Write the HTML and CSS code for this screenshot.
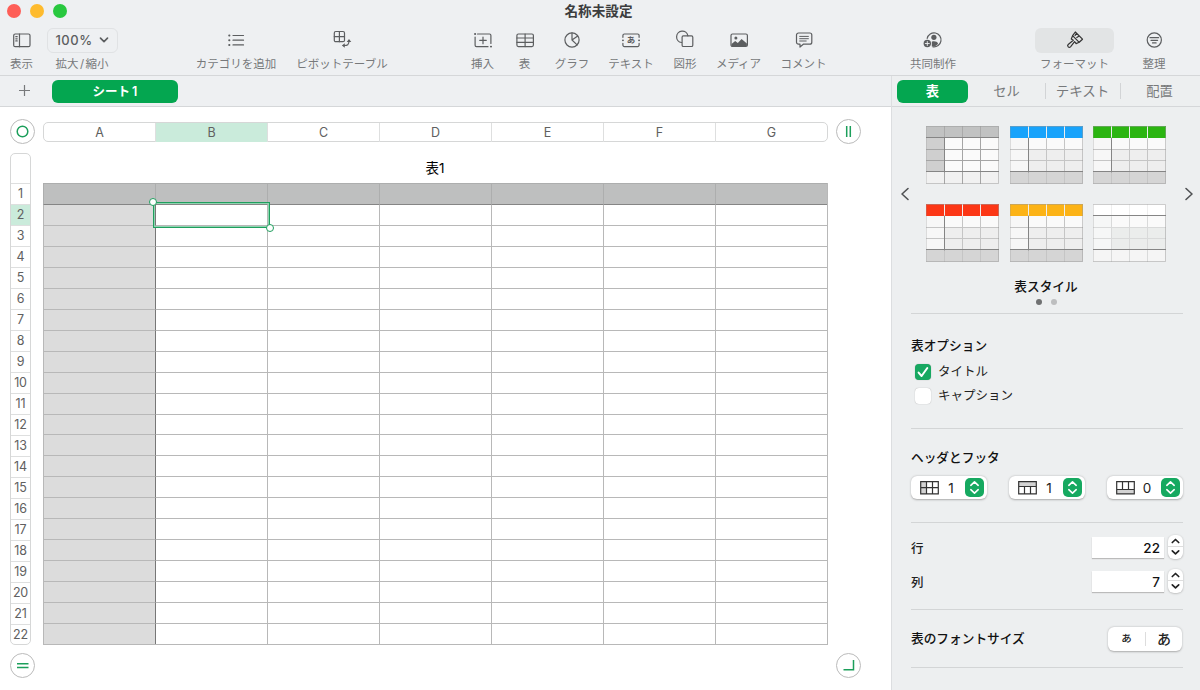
FILE: index.html
```html
<!DOCTYPE html>
<html lang="ja">
<head>
    <meta charset="UTF-8">
    <meta name="viewport" content="width=device-width, initial-scale=1.0">
    <title>名称未設定</title>
    <link rel="stylesheet" href="styles.css">
</head>
<body>
    <header class="titlebar">
        <div class="title-row">
            <div class="lights"><i class="light red"></i><i class="light yellow"></i><i class="light green"></i></div>
            <h1>名称未設定</h1>
        </div>
        <nav class="toolbar">
            <div class="group view">
                <div class="tool">
                    <span class="icon"><svg width="20" height="20" viewBox="0 0 20 20"><rect x="1.7" y="4" width="16.3" height="12.7" rx="1.5"/><path d="M7.5 4v12.7M3.8 6.7h1.4M3.8 8.8h1.4M3.8 10.9h1.4"/></svg></span>
                    <span>表示</span>
                </div>
                <div class="tool">
                    <span class="icon zoom">100% <svg width="10" height="8" viewBox="0 0 10 8"><path d="M1.5 2.2L5 5.6l3.5-3.4" stroke-width="1.7"/></svg></span>
                    <span class="zoom-label">拡大<i>/</i>縮小</span>
                </div>
            </div>
            <div class="group data">
                <div class="tool">
                    <span class="icon"><svg width="20" height="20" viewBox="0 0 20 20"><path d="M7 5.5h10.5M7 10.2h10.5M7 14.9h10.5"/><path d="M3.2 5.5h.2M3.2 10.2h.2M3.2 14.9h.2" stroke-width="2"/></svg></span>
                    <span>カテゴリを追加</span>
                </div>
                <div class="tool">
                    <span class="icon"><svg width="20" height="20" viewBox="0 0 20 20"><rect x="2.3" y="1.5" width="10.2" height="10.2" rx="1.5"/><path d="M7.4 1.5v10.2M2.3 6.6h10.2M11.3 15.5c4.3.2 5.7-.8 5.7-4.8"/><path class="solid" d="M12.8 13.3v4.4L9.9 15.5zM14.7 12l2.3-3 2.3 3z"/></svg></span>
                    <span>ピボットテーブル</span>
                </div>
            </div>
            <div class="group insert">
                <div class="tool">
                    <span class="icon"><svg width="20" height="20" viewBox="0 0 20 20"><path d="M4.5 4h12a1.4 1.4 0 0 1 1.4 1.4V13.5M15 16.7H3.5a1.4 1.4 0 0 1-1.4-1.4V7M10 7v6.7M6.7 10.3h6.6"/><path d="M2 4h.2M17.9 16.6h.2" stroke-width="1.9"/></svg></span>
                    <span>挿入</span>
                </div>
                <div class="tool">
                    <span class="icon"><svg width="20" height="20" viewBox="0 0 20 20"><rect x="1.9" y="4" width="16.5" height="12.6" rx="1.5"/><path d="M1.9 8h16.5M1.9 12.3h16.5M10.1 4v12.6"/></svg></span>
                    <span>表</span>
                </div>
                <div class="tool">
                    <span class="icon"><svg width="20" height="20" viewBox="0 0 20 20"><circle cx="10" cy="10" r="7.1"/><path d="M10 2.9V10l5.1 4.9M10 10l5.7-4.1"/></svg></span>
                    <span>グラフ</span>
                </div>
                <div class="tool">
                    <span class="icon textbox"><svg width="20" height="20" viewBox="0 0 20 20"><path d="M1.9 7.3V5.5A1.5 1.5 0 0 1 3.4 4h13.2a1.5 1.5 0 0 1 1.5 1.5v1.8M18.1 13.3v1.8a1.5 1.5 0 0 1-1.5 1.5H3.4a1.5 1.5 0 0 1-1.5-1.5v-1.8"/><path d="M1.9 10.3h.1M18 10.3h.1" stroke-width="1.8"/></svg><b>あ</b></span>
                    <span>テキスト</span>
                </div>
                <div class="tool">
                    <span class="icon"><svg width="20" height="20" viewBox="0 0 20 20"><path d="M6.5 12.5A5.7 5.7 0 1 1 12.9 5.8"/><rect x="7.1" y="5.9" width="10.7" height="10.6" rx="1.3"/></svg></span>
                    <span>図形</span>
                </div>
                <div class="tool">
                    <span class="icon"><svg width="20" height="20" viewBox="0 0 20 20"><rect x="2" y="4" width="16.4" height="12.5" rx="1.5"/><path class="solid" d="M2.5 14l3.7-3 2.6 2 3.8-4 5.3 4.5V16H2.5z"/><circle class="solid" cx="6.9" cy="7.9" r="1.5"/></svg></span>
                    <span>メディア</span>
                </div>
                <div class="tool">
                    <span class="icon"><svg width="20" height="20" viewBox="0 0 20 20"><path d="M4.5 3h11.3a2 2 0 0 1 2 2v7.2a2 2 0 0 1-2 2H9.3L6 17v-2.8H4.5a2 2 0 0 1-2-2V5a2 2 0 0 1 2-2z"/><path d="M5.7 6.4h8.7M5.7 8.7h8.7M5.7 11h6.5" stroke-width="1"/></svg></span>
                    <span>コメント</span>
                </div>
            </div>
            <div class="group share">
                <div class="tool">
                    <span class="icon"><svg width="20" height="20" viewBox="0 0 20 20"><path d="M4.2 8.3A7 7 0 1 1 10 16.8"/><circle class="solid" cx="10.9" cy="7.3" r="2.6"/><path class="solid" d="M8.8 16.4v-4.7c2.4-.9 5.4-.2 6.3 2-1.2 1.8-3.5 3-6.3 2.7z"/><circle class="solid" cx="4.3" cy="13.5" r="3.7"/><path class="light-line" d="M4.3 11.5v4M2.3 13.5h4"/></svg></span>
                    <span>共同制作</span>
                </div>
            </div>
            <div class="group inspect">
                <div class="tool active">
                    <span class="icon"><svg width="20" height="20" viewBox="0 0 20 20"><path d="M10.3 2l7.2 7.2-3.3 3.1-6.6-6.6zM7.6 5.7l-1.3 3.2 2 1.4-5.1 4.2a1.6 1.6 0 0 0 2.3 2.3l4.1-5.1 1.5 1.9 3.1-1.3M11.5 3.4l-1.4 2M14.2 6l-2.4 1.5"/></svg></span>
                    <span>フォーマット</span>
                </div>
                <div class="tool">
                    <span class="icon"><svg width="20" height="20" viewBox="0 0 20 20"><circle cx="10.3" cy="10" r="7.1"/><path d="M6 7.7h8.6M7 10.3h6.6M8.5 12.9h3.6"/></svg></span>
                    <span>整理</span>
                </div>
            </div>
        </nav>
    </header>

    <main class="window">
        <section class="document">
            <div class="sheet-tabs">
                <span class="add"><svg width="11" height="11" viewBox="0 0 11 11"><path d="M5.5 0v11M0 5.5h11"/></svg></span>
                <span class="sheet-tab">シート<i>1</i></span>
            </div>
            <div class="canvas">
                <span class="knob"><svg width="23" height="23" viewBox="0 0 23 23"><circle cx="11.5" cy="11.5" r="5.3"/></svg></span>
                <div class="columns" id="columns"></div>
                <span class="knob"><svg width="23" height="23" viewBox="0 0 23 23"><path d="M9.7 6v11M13.3 6v11"/></svg></span>

                <div class="rows" id="rows"></div>
                <div class="table-area">
                    <div class="table-title">表1</div>
                    <div class="sheet" id="sheet"></div>
                </div>

                <span class="knob bottom-left"><svg width="23" height="23" viewBox="0 0 23 23"><path d="M6 9.7h11.5M6 13.5h11.5"/></svg></span>
                <span class="knob bottom-right"><svg width="23" height="23" viewBox="0 0 23 23"><path d="M6.5 15.8h10V6"/></svg></span>
            </div>
        </section>

        <aside class="panel">
            <div class="panel-tabs">
                <span class="on">表</span><span>セル</span><span class="text-tab">テキスト</span><span>配置</span>
            </div>

            <div class="styles">
                <svg class="arrow" width="10" height="14" viewBox="0 0 10 14"><path d="M8 1.5L2 7l6 5.5"/></svg>
                <div class="thumbs" id="thumbs"></div>
                <svg class="arrow" width="10" height="14" viewBox="0 0 10 14"><path d="M2 1.5L8 7l-6 5.5"/></svg>
            </div>
            <div class="styles-caption">表スタイル</div>
            <div class="dots"><i class="current"></i><i></i></div>

            <div class="section options">
                <h2>表オプション</h2>
                <div class="check"><span class="box checked"><svg width="16" height="16" viewBox="0 0 16 16"><path d="M3.6 8.6l3 3.4 5.7-8"/></svg></span>タイトル</div>
                <div class="check"><span class="box"></span>キャプション</div>
            </div>

            <div class="section headers">
                <h2>ヘッダとフッタ</h2>
                <div class="popups">
                    <div class="popup">
                        <svg width="19" height="14" viewBox="0 0 19 14"><path class="shade" d="M1 1h5.5v12H1z"/><path d="M.7.7h17.6v12.1H.7zM.7 6.7h17.6M6.5.7v12.1M12.5.7v12.1"/></svg>
                        <span>1</span><b><svg width="19" height="19" viewBox="0 0 19 19"><path d="M5.8 7.3l3.7-3.5 3.7 3.5M5.8 11.7l3.7 3.5 3.7-3.5"/></svg></b>
                    </div>
                    <div class="popup">
                        <svg width="19" height="14" viewBox="0 0 19 14"><path class="shade" d="M1 1h17v4.5H1z"/><path d="M.7.7h17.6v12.1H.7zM.7 5.5h17.6M6.5 5.5v7.3M12.5 5.5v7.3"/></svg>
                        <span>1</span><b><svg width="19" height="19" viewBox="0 0 19 19"><path d="M5.8 7.3l3.7-3.5 3.7 3.5M5.8 11.7l3.7 3.5 3.7-3.5"/></svg></b>
                    </div>
                    <div class="popup">
                        <svg width="19" height="14" viewBox="0 0 19 14"><path class="shade" d="M1 8.5h17v4.5H1z"/><path d="M.7.7h17.6v12.1H.7zM.7 8.5h17.6M6.5.7v7.8M12.5.7v7.8"/></svg>
                        <span>0</span><b><svg width="19" height="19" viewBox="0 0 19 19"><path d="M5.8 7.3l3.7-3.5 3.7 3.5M5.8 11.7l3.7 3.5 3.7-3.5"/></svg></b>
                    </div>
                </div>
            </div>

            <div class="section counts">
                <div class="count">
                    <label>行</label><span class="field">22</span>
                    <svg class="stepper" width="15" height="24" viewBox="0 0 15 24"><path class="divider" d="M0 11.5h15"/><path d="M4.3 7.5l3.2-3 3.2 3M4.3 15.8l3.2 3 3.2-3"/></svg>
                </div>
                <div class="count">
                    <label>列</label><span class="field">7</span>
                    <svg class="stepper" width="15" height="24" viewBox="0 0 15 24"><path class="divider" d="M0 11.5h15"/><path d="M4.3 7.5l3.2-3 3.2 3M4.3 15.8l3.2 3 3.2-3"/></svg>
                </div>
            </div>

            <div class="section font-size">
                <h2>表のフォントサイズ</h2>
                <div class="size-buttons"><span class="small">あ</span><span class="large">あ</span></div>
            </div>
            <div class="section"></div>
        </aside>
    </main>

    <script src="script.js"></script>
</body>
</html>
```
FILE: styles.css
```css
*, *::before, *::after {
    box-sizing: border-box;
}
body {
    margin: 0;
    width: 1200px;
    height: 690px;
    overflow: hidden;
    font-family: Inter, "Noto Sans CJK JP", sans-serif;
    background-color: #eef0f2;
    color: #222;
}
svg {
    display: block;
    fill: none;
    stroke: currentColor;
    stroke-width: 1.2;
    stroke-linecap: round;
    stroke-linejoin: round;
}
h1, h2 {
    margin: 0;
}
i {
    font-style: normal;
}

/* title bar and toolbar */
.titlebar {
    height: 76px;
    border-bottom: 1px solid #d5d7d9;
}
.title-row {
    display: grid;
    grid-template-columns: 100px 1fr 103px;
    height: 23px;
    align-items: center;
}
.lights {
    display: flex;
    gap: 9px;
    padding-left: 7px;
    margin-top: -1px;
}
.light {
    width: 14px;
    height: 14px;
    border-radius: 50%;
}
.red { background-color: #fe5e57; }
.yellow { background-color: #febb2e; }
.green { background-color: #28c83f; }
.title-row h1 {
    margin-top: -2px;
    font-size: 13.6px;
    line-height: 20px;
    text-align: center;
    color: #3c3d3e;
}
.toolbar {
    display: flex;
    padding-top: 5px;
    color: #5c5e60;
}
.group {
    display: grid;
}
.view { grid-template-columns: 43px 78px; }
.data { grid-template-columns: 92px 120px; margin-left: 69px; }
.insert { grid-template-columns: 43px 41px 54px 64px 44px 63px 67px; margin-left: 59px; }
.share { grid-template-columns: 64px; margin-left: 64px; }
.inspect { grid-template-columns: 79px 80px; margin-left: 70px; }
.tool {
    display: flex;
    flex-direction: column;
    align-items: center;
    gap: 3px;
    font-size: 11.5px;
    line-height: 17px;
    white-space: nowrap;
    color: #77797b;
}
.icon {
    display: flex;
    align-items: center;
    justify-content: center;
    height: 25px;
    color: #5c5e60;
}
.icon > svg {
    margin-top: -1px;
}
.zoom {
    width: 71px;
    gap: 6px;
    border: 1px solid #e0e2e4;
    border-radius: 6px;
    font-size: 13px;
    font-weight: 500;
    letter-spacing: 0.5px;
    line-height: 21px;
    padding-bottom: 1px;
}
.zoom > svg {
    margin-top: 0;
}
.zoom-label i {
    padding: 0 1.5px;
}
.active .icon {
    width: 79px;
    border-radius: 6px;
    background-color: #e2e4e5;
    color: #333;
}
.textbox {
    display: grid;
}
.textbox > * {
    grid-area: 1 / 1;
    text-align: center;
}
.textbox b {
    font-size: 8.5px;
    line-height: 19px;
}
.solid {
    fill: currentColor;
    stroke: none;
}
.light-line {
    stroke: #eef0f2;
    stroke-width: 0.9;
}

/* document side */
.window {
    display: grid;
    grid-template-columns: 891px 309px;
    height: 614px;
}
.document {
    display: flex;
    flex-direction: column;
}
.sheet-tabs {
    display: flex;
    align-items: center;
    height: 31px;
    padding-left: 19px;
    border-bottom: 1px solid #d5d7d9;
    color: #77797b;
}
.add {
    width: 33px;
}
.add svg {
    margin-top: -1px;
}
.sheet-tab {
    width: 126px;
    height: 23px;
    border-radius: 6px;
    background-color: #04a650;
    color: #fff;
    font-size: 12.5px;
    font-weight: 600;
    line-height: 23px;
    text-align: center;
}
.sheet-tab i {
    padding-left: 2px;
}
.canvas {
    flex: 1;
    display: grid;
    grid-template-columns: 25px 785px 25px;
    grid-template-rows: 25px 492px 25px;
    column-gap: 8px;
    row-gap: 9px;
    padding: 12px 0 0 10px;
    background-color: #fff;
    align-items: center;
}
.knob {
    width: 25px;
    height: 25px;
    margin-left: -0.5px;
    border: 1px solid #bbb;
    border-radius: 50%;
    background-color: #fff;
    color: #1c9f5b;
}
.knob svg {
    stroke-width: 1.5;
    stroke-linecap: butt;
    stroke-linejoin: miter;
}
.bottom-left {
    grid-column: 1;
    margin-top: -2px;
}
.bottom-right {
    grid-column: 3;
    margin-top: -2px;
}
.columns {
    display: grid;
    grid-template-columns: 111px repeat(6, 112px);
    height: 20px;
    margin-top: 1px;
    border: 1px solid #d6d7d7;
    border-radius: 5px;
    font-size: 12.5px;
    line-height: 19px;
    text-align: center;
    color: #606060;
}
.columns span + span {
    border-left: 1px solid #dedfdf;
}
.columns .selected, .rows .selected {
    background-color: #caebdb;
}
.rows {
    display: grid;
    grid-template-rows: 29px repeat(22, 1fr);
    width: 21px;
    height: 492px;
    border: 1px solid #d6d7d7;
    border-radius: 5px;
    font-size: 12.5px;
    letter-spacing: -0.2px;
    line-height: 20px;
    text-align: center;
    color: #606060;
}
.rows span + span {
    border-top: 1px solid #dedfdf;
}
.table-area {
    height: 492px;
}
.table-title {
    height: 30px;
    padding-right: 1px;
    font-size: 13.5px;
    line-height: 31px;
    text-align: center;
    color: #000;
}
.sheet {
    position: relative;
    display: grid;
    grid-template-columns: repeat(7, 112px);
    grid-template-rows: repeat(22, 1fr);
    height: 462px;
    border: solid #b8b8b8;
    border-width: 0 1px 1px 0;
}
.cell {
    border: solid #b8b8b8;
    border-width: 1px 0 0 1px;
}
.cell.side {
    background-color: #dcdcdc;
}
.cell.head {
    background-color: #bebfbf;
    border-color: #adaeae;
}
.cell.below-head {
    border-top-color: #858585;
}
.cell.beside-side {
    border-left-color: #777;
}
.selection {
    position: absolute;
    left: 110px;
    top: 19px;
    width: 117px;
    height: 26px;
    border: 1px solid #1f9f5e;
    box-shadow: inset 0 0 0 1px #8fd3b0;
}
.selection::before, .selection::after {
    content: "";
    position: absolute;
    width: 8px;
    height: 8px;
    border: 1.2px solid #1f9f5e;
    border-radius: 50%;
    background-color: #fff;
}
.selection::before {
    left: -5px;
    top: -5px;
}
.selection::after {
    right: -5px;
    bottom: -5px;
}

/* format panel */
.panel {
    border-left: 1px solid #dcdee0;
    background-color: #edeff0;
    font-size: 12.5px;
}
.panel-tabs {
    display: grid;
    grid-template-columns: 71px 77px 75px 78px;
    height: 31px;
    padding-left: 5px;
    align-items: center;
    border-bottom: 1px solid #d5d7d9;
    color: #77797b;
    font-size: 13.3px;
    line-height: 16px;
    text-align: center;
}
.panel-tabs span + span + span {
    border-left: 1px solid #d2d4d6;
}
.panel-tabs .on {
    height: 23px;
    border-radius: 6px;
    background-color: #04a650;
    color: #fff;
    font-weight: 600;
    line-height: 23px;
}
.panel-tabs .text-tab {
    padding-right: 1px;
    font-size: 13.5px;
}
.styles {
    display: flex;
    align-items: center;
    justify-content: space-between;
    height: 156px;
    padding: 18px 6px 0 8px;
}
.arrow {
    color: #505254;
    stroke-width: 1.6;
}
.thumbs {
    display: grid;
    grid-template-columns: repeat(3, 73px);
    gap: 20px 10.5px;
    margin-right: 2px;
}
.styles-caption {
    height: 31px;
    padding-top: 14px;
    font-size: 12.7px;
    font-weight: 500;
    line-height: 20px;
    text-align: center;
    color: #111;
}
.dots {
    display: flex;
    justify-content: center;
    gap: 9px;
    height: 19px;
    padding-top: 5px;
}
.dots i {
    width: 6px;
    height: 6px;
    border-radius: 50%;
    background-color: #bdbebf;
}
.dots .current {
    background-color: #707172;
}
.section {
    margin: 0 17px 0 19px;
    border-top: 1px solid #d3d5d6;
}
.section h2 {
    font-size: 12.7px;
    font-weight: 500;
    line-height: 20px;
    color: #111;
}
.options {
    height: 115px;
    padding-top: 22px;
}
.options h2 {
    margin-bottom: 4px;
}
.check {
    display: flex;
    align-items: center;
    gap: 7px;
    height: 24px;
    padding-left: 4px;
    line-height: 24px;
}
.box {
    width: 16px;
    height: 16px;
    border-radius: 4px;
    background-color: #fff;
    box-shadow: 0 0 1px #999;
}
.checked {
    background-color: #17a861;
    color: #fff;
}
.checked svg {
    stroke-width: 2;
}
.headers {
    height: 94px;
    padding-top: 19px;
}
.popups {
    display: flex;
    justify-content: space-between;
    margin-top: 8px;
}
.popup {
    display: flex;
    align-items: center;
    width: 76px;
    height: 23px;
    padding: 0 3px 0 9px;
    border-radius: 6px;
    background-color: #fff;
    box-shadow: 0 0.5px 2px #aaa;
    font-size: 13.5px;
}
.popup > svg {
    stroke-linejoin: miter;
    color: #333;
}
.shade {
    fill: #d3d3d3;
    stroke: none;
}
.popup span {
    flex: 1;
    padding-right: 2px;
    text-align: center;
}
.popup b {
    border-radius: 5px;
    background-color: #16a960;
    color: #fff;
}
.popup b svg {
    stroke-width: 1.6;
}
.counts {
    height: 87px;
    padding-top: 12px;
}
.count {
    display: flex;
    align-items: center;
    height: 24px;
    margin-bottom: 10px;
}
.count label {
    flex: 1;
    font-weight: 500;
}
.field {
    width: 72px;
    height: 21px;
    margin-right: 4px;
    padding-right: 4px;
    background-color: #fff;
    box-shadow: 0 1px 1px #bbb;
    font-size: 13.5px;
    font-weight: 500;
    line-height: 22px;
    text-align: right;
    color: #111;
}
.stepper {
    border-radius: 6px;
    background-color: #fff;
    box-shadow: 0 0.5px 2px #aaa;
    stroke-width: 1.7;
}
.stepper .divider {
    stroke: #ddd;
    stroke-width: 1;
}
.font-size {
    display: flex;
    align-items: center;
    justify-content: space-between;
    height: 58px;
    padding-right: 1px;
}
.size-buttons {
    display: grid;
    grid-template-columns: 1fr 1fr;
    align-items: center;
    width: 74px;
    height: 24px;
    border-radius: 6px;
    background-color: #fff;
    box-shadow: 0 0.5px 2px #aaa;
    font-weight: 500;
    line-height: 14px;
    text-align: center;
}
.small {
    font-size: 10.5px;
}
.large {
    border-left: 1px solid #ddd;
    font-size: 14px;
}
```
FILE: script.js
```javascript
const columnNames = ['A', 'B', 'C', 'D', 'E', 'F', 'G'];
const rowCount = 22;

function addSpan(parent, text, className) {
    const el = document.createElement('span');
    el.textContent = text;
    el.className = className;
    parent.appendChild(el);
}

const columns = document.getElementById('columns');
for (let name of columnNames) {
    addSpan(columns, name, name === 'B' ? 'selected' : '');
}

const rows = document.getElementById('rows');
addSpan(rows, '', '');
for (let i = 1; i <= rowCount; i++) {
    addSpan(rows, i, i === 2 ? 'selected' : '');
}

const sheet = document.getElementById('sheet');
for (let r = 0; r < rowCount; r++) {
    for (let c = 0; c < columnNames.length; c++) {
        let name = 'cell';
        if (r === 0) name += ' head';
        else if (c === 0) name += ' side';
        if (r === 1) name += ' below-head';
        if (c === 1 && r > 0) name += ' beside-side';
        addSpan(sheet, '', name);
    }
}
addSpan(sheet, '', 'selection');

// Table style thumbnails: header, side column, body and footer colours
const tableStyles = [
    { head: '#c1c2c2', side: '#cfcfcf', body: '#fafafa', foot: '#f1f1f1', line: '#a5a5a5' },
    { head: '#18a3fb', side: '#f7f7f7', body: '#eeeeee', foot: '#d5d5d5', line: '#c5c5c5' },
    { head: '#2bb511', side: '#f7f7f7', body: '#eeeeee', foot: '#d5d5d5', line: '#c5c5c5' },
    { head: '#fc3716', side: '#f7f7f7', body: '#eeeeee', foot: '#d5d5d5', line: '#c5c5c5' },
    { head: '#fcb316', side: '#f7f7f7', body: '#eeeeee', foot: '#d5d5d5', line: '#c5c5c5' },
    { head: '#ffffff', side: '#f6f7f7', body: '#ebedec', foot: '#f5f5f5', line: '#d9dada' }
];

document.getElementById('thumbs').innerHTML = tableStyles.map((s, i) => `
    <svg width="73" height="58" viewBox="0 0 73 58" stroke-linecap="butt">
        <g stroke="none">
            <rect width="73" height="12" fill="${s.head}"/>
            <rect y="12" width="73" height="34" fill="#fafafa"/>
            <rect x="18" y="23" width="55" height="23" fill="${s.body}"/>
            <rect y="12" width="18" height="34" fill="${s.side}"/>
            <rect y="46" width="73" height="12" fill="${s.foot}"/>
        </g>
        <path stroke="${s.line}" stroke-width="1" d="M0 23.5h73M0 34.5h73M18.5 12v46M36.5 12v46M54.5 12v46"/>
        <path stroke="${i === 0 ? '#aaa' : '#eee'}" stroke-width="1" d="M18.5 0v12M36.5 0v12M54.5 0v12"/>
        <rect x=".5" y=".5" width="72" height="57" stroke="#999" stroke-opacity=".5" stroke-width="1"/>
        <path stroke="#858585" stroke-width="1" d="M0 45.5h73${i === 0 || i === 5 ? 'M0 11.5h73' : ''}${i < 5 ? 'M18.5 12v34' : ''}"/>
    </svg>`).join('');
```
